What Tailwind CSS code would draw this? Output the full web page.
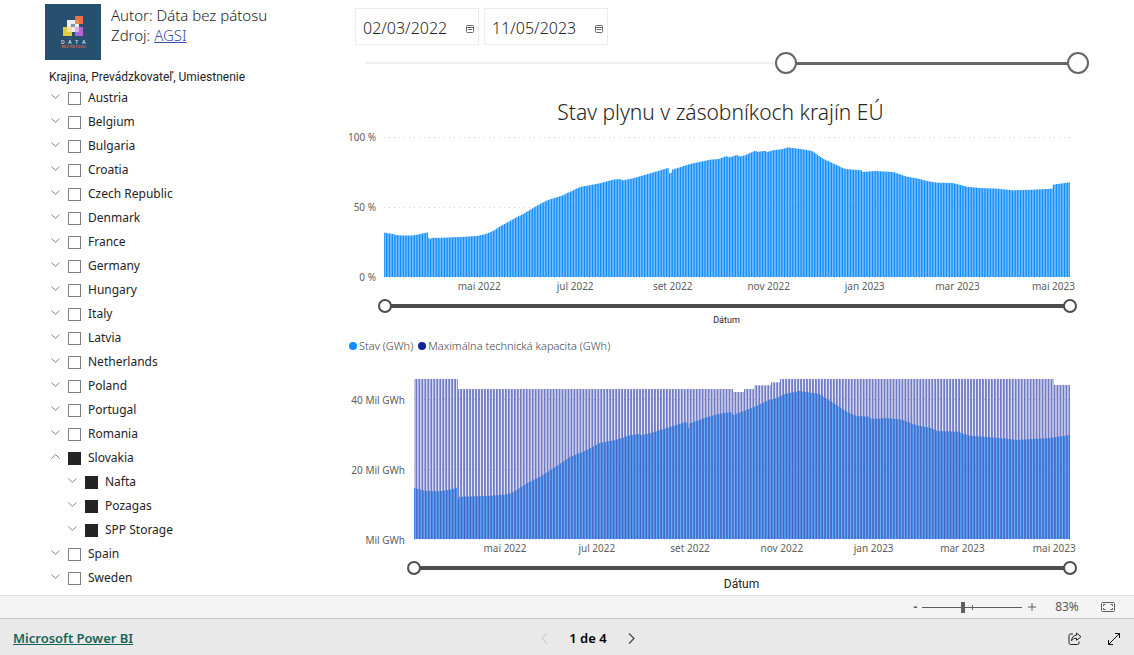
<!DOCTYPE html>
<html lang="sk">
<head>
<meta charset="utf-8">
<meta name="viewport" content="width=device-width, initial-scale=1">
<title>Stav plynu v zásobníkoch krajín EÚ</title>
<script src="https://cdn.jsdelivr.net/npm/@tailwindcss/browser@4"></script>
</head>
<body class="flex min-h-screen flex-col bg-white font-['Noto_Sans','Open_Sans',sans-serif] text-[#252423]">
<main class="flex flex-1">
  <aside class="w-[348px] shrink-0 pt-1 pl-[45px]">
    <header class="flex gap-[10px]">
      <svg class="size-14 shrink-0 bg-[#27506f]" viewBox="0 0 56 56" role="img" aria-label="Dáta bez pátosu">
        <rect x="22" y="16" width="12" height="12" fill="#eeeef2"/>
        <rect x="18" y="23" width="9" height="9" fill="#e3cb3a"/>
        <rect x="30" y="23" width="8" height="9" fill="#b565dc"/>
        <rect x="30" y="12" width="8" height="8" fill="#e8714a"/>
        <rect x="30" y="16" width="4" height="4" fill="#f08c4a"/>
        <rect x="22" y="23" width="5" height="5" fill="#eee0a0"/>
        <rect x="30" y="23" width="4" height="5" fill="#d9aeea"/>
        <rect x="26" y="20" width="4" height="3" fill="#7d93a8"/>
        <text y="40" font-size="5" font-family="Inter,sans-serif" font-weight="600" fill="#d5dde4"><tspan x="16">D</tspan><tspan x="23">Á</tspan><tspan x="30">T</tspan><tspan x="37">A</tspan></text>
        <text x="28.500" y="44" font-size="4" text-anchor="middle" font-family="Inter,sans-serif" font-weight="600" fill="#c8614c">BEZ PÁTOSU</text>
      </svg>
      <p class="pt-px text-[15px] leading-5 font-light">Autor: Dáta bez pátosu<br>Zdroj: <a href="#" class="text-[#3a4fa8] underline">AGSI</a></p>
    </header>
    <h2 class="mt-[9px] pl-1 font-[Roboto,sans-serif] text-[12px] leading-4">Krajina, Prevádzkovateľ, Umiestnenie</h2>
    <ul id="tree" class="pt-px pl-[5px] text-[12px] leading-6"></ul>
  </aside>

  <section class="min-w-0 flex-1 pt-2 pr-[45px]">
    <div class="flex gap-[5px] pl-[7px]" id="dates">
      <label class="flex h-[37px] w-[124px] items-center border border-[#ececec] pr-1 pl-[7px]">
        <input aria-label="Dátum od" value="02/03/2022" class="w-0 flex-1 pt-[2px] text-[16px] font-light outline-none">
        <svg class="mt-1 size-2" viewBox="0 0 8 8" fill="none" stroke="#66696c"><rect x=".5" y=".5" width="7" height="7" rx="1"/><path d="M.5 2.500h7M2 4.500h4"/></svg>
      </label>
      <label class="flex h-[37px] w-[124px] items-center border border-[#ececec] pr-1 pl-[7px]">
        <input aria-label="Dátum do" value="11/05/2023" class="w-0 flex-1 pt-[2px] text-[16px] font-light outline-none">
        <svg class="mt-1 size-2" viewBox="0 0 8 8" fill="none" stroke="#66696c"><rect x=".5" y=".5" width="7" height="7" rx="1"/><path d="M.5 2.500h7M2 4.500h4"/></svg>
      </label>
    </div>

    <div class="relative mt-[7px] ml-[17px] flex h-[22px] items-center">
      <div class="h-[2px] w-full bg-[#f0f0f0]"></div>
      <div class="absolute right-[11px] h-[3px] w-[40%] bg-[#666666]"></div>
      <input type="range" aria-label="Začiatok obdobia" min="0" max="1000" value="584" class="pointer-events-none absolute inset-0 w-full appearance-none bg-transparent [&::-webkit-slider-thumb]:pointer-events-auto [&::-webkit-slider-thumb]:size-[22px] [&::-webkit-slider-thumb]:appearance-none [&::-webkit-slider-thumb]:rounded-full [&::-webkit-slider-thumb]:border-2 [&::-webkit-slider-thumb]:border-[#666666] [&::-webkit-slider-thumb]:bg-white">
      <input type="range" aria-label="Koniec obdobia" min="0" max="1000" value="1000" class="pointer-events-none absolute inset-0 w-full appearance-none bg-transparent [&::-webkit-slider-thumb]:pointer-events-auto [&::-webkit-slider-thumb]:size-[22px] [&::-webkit-slider-thumb]:appearance-none [&::-webkit-slider-thumb]:rounded-full [&::-webkit-slider-thumb]:border-2 [&::-webkit-slider-thumb]:border-[#666666] [&::-webkit-slider-thumb]:bg-white">
    </div>

    <h1 class="mt-[22px] pl-1 text-center text-[21px] leading-8 font-[350]">Stav plynu v zásobníkoch krajín EÚ</h1>

    <div class="mt-[9px] flex pr-[19px]">
      <div class="flex h-[140px] w-9 shrink-0 flex-col justify-between pr-2 text-right text-[10px] leading-none whitespace-nowrap text-[#605e5c]">
        <span class="-mt-[5px]">100 %</span><span>50 %</span><span class="-mb-[5px]">0 %</span>
      </div>
      <svg id="percent" class="h-[154px] min-w-0 flex-1 overflow-visible"></svg>
    </div>
    <div class="relative mt-[8px] mr-3 ml-[30px] flex h-[14px] items-center">
      <div class="mx-[7px] h-1 flex-1 bg-[#4d4d4d]"></div>
      <input type="range" aria-label="Graf 1 od" value="0" class="pointer-events-none absolute inset-0 w-full appearance-none bg-transparent [&::-webkit-slider-thumb]:pointer-events-auto [&::-webkit-slider-thumb]:size-[14px] [&::-webkit-slider-thumb]:appearance-none [&::-webkit-slider-thumb]:rounded-full [&::-webkit-slider-thumb]:border-2 [&::-webkit-slider-thumb]:border-[#4d4d4d] [&::-webkit-slider-thumb]:bg-white">
      <input type="range" aria-label="Graf 1 do" value="100" class="pointer-events-none absolute inset-0 w-full appearance-none bg-transparent [&::-webkit-slider-thumb]:pointer-events-auto [&::-webkit-slider-thumb]:size-[14px] [&::-webkit-slider-thumb]:appearance-none [&::-webkit-slider-thumb]:rounded-full [&::-webkit-slider-thumb]:border-2 [&::-webkit-slider-thumb]:border-[#4d4d4d] [&::-webkit-slider-thumb]:bg-white">
    </div>
    <p class="pl-4 text-center font-[Roboto,sans-serif] text-[9px] leading-[14px]">Dátum</p>

    <div class="mt-[11px] flex items-center gap-[5px] pl-px text-[11px] leading-4 font-light whitespace-nowrap text-[#403e3c]">
      <span class="flex items-center gap-[2px]"><i class="size-2 rounded-full bg-[#118dff]"></i>Stav (GWh)</span>
      <span class="flex items-center gap-[2px]"><i class="size-2 rounded-full bg-[#12239e]"></i>Maximálna technická kapacita (GWh)</span>
    </div>

    <div class="mt-[25px] flex pr-[19px]">
      <div class="flex h-[160px] w-[66px] shrink-0 flex-col pt-[14px] pr-[9px] text-right text-[10px] whitespace-nowrap text-[#605e5c]">
        <span class="h-[70px] shrink-0 leading-[14px]">40 Mil GWh</span><span class="h-[70px] shrink-0 leading-[14px]">20 Mil GWh</span><span class="shrink-0 leading-[14px]">Mil GWh</span>
      </div>
      <svg id="energy" class="h-[174px] min-w-0 flex-1 overflow-visible"></svg>
    </div>
    <div class="relative mt-[8px] mr-3 ml-[59px] flex h-[14px] items-center">
      <div class="mx-[7px] h-1 flex-1 bg-[#4d4d4d]"></div>
      <input type="range" aria-label="Graf 2 od" value="0" class="pointer-events-none absolute inset-0 w-full appearance-none bg-transparent [&::-webkit-slider-thumb]:pointer-events-auto [&::-webkit-slider-thumb]:size-[14px] [&::-webkit-slider-thumb]:appearance-none [&::-webkit-slider-thumb]:rounded-full [&::-webkit-slider-thumb]:border-2 [&::-webkit-slider-thumb]:border-[#4d4d4d] [&::-webkit-slider-thumb]:bg-white">
      <input type="range" aria-label="Graf 2 do" value="100" class="pointer-events-none absolute inset-0 w-full appearance-none bg-transparent [&::-webkit-slider-thumb]:pointer-events-auto [&::-webkit-slider-thumb]:size-[14px] [&::-webkit-slider-thumb]:appearance-none [&::-webkit-slider-thumb]:rounded-full [&::-webkit-slider-thumb]:border-2 [&::-webkit-slider-thumb]:border-[#4d4d4d] [&::-webkit-slider-thumb]:bg-white">
    </div>
    <p class="pt-px pl-[46px] text-center font-[Roboto,sans-serif] text-[12px] leading-4">Dátum</p>
  </section>
</main>

<div class="flex h-[23px] items-center justify-end border-t border-[#dddddd] bg-[#f4f4f4] pr-[19px] text-[12px] text-[#605e5c]">
  <button class="w-[13px] text-center font-bold leading-none" aria-label="Oddialiť">-</button>
  <div class="relative flex h-3 w-[100px] items-center">
    <div class="h-px w-full bg-[#605e5c]"></div>
    <div class="absolute left-1/2 h-[5px] w-px bg-[#605e5c]"></div>
    <input type="range" aria-label="Priblíženie" value="41" class="absolute inset-0 w-full appearance-none bg-transparent [&::-webkit-slider-thumb]:h-[11px] [&::-webkit-slider-thumb]:w-1 [&::-webkit-slider-thumb]:appearance-none [&::-webkit-slider-thumb]:bg-[#605e5c]">
  </div>
  <button class="flex w-5 justify-center" aria-label="Priblížiť"><svg class="size-2" viewBox="0 0 8 8" stroke="#605e5c"><path d="M0 4h8M4 0v8"/></svg></button>
  <span class="w-[50px] text-center">83%</span>
  <button class="ml-[9px]" aria-label="Prispôsobiť strane"><svg class="h-[10px] w-[14px]" viewBox="0 0 14 10" fill="none" stroke="#605e5c"><rect x=".5" y=".5" width="13" height="9" rx="1"/><path d="M4.500 2.500h-2v1.500M2.500 6v1.500h2M9.500 2.500h2v1.500M11.500 6v1.500h-2"/></svg></button>
</div>
<footer class="grid h-[37px] grid-cols-[1fr_auto_1fr] items-center border-t border-[#c6c6c6] bg-[#e9e9e9] pt-[3px] pr-[14px] pl-[13px] text-[13px]">
  <a href="#" class="justify-self-start font-semibold text-[#17645a] underline">Microsoft Power BI</a>
  <nav class="flex items-center gap-[21px] pl-[43px] font-semibold text-black" aria-label="Strany">
    <button aria-label="Predchádzajúca" class="text-[#bdbdbd]"><svg class="h-[11px] w-[7px]" viewBox="0 0 7 11" fill="none" stroke="currentColor"><path d="M6 .5l-5 5 5 5"/></svg></button>
    <span>1 de 4</span>
    <button aria-label="Nasledujúca" class="text-[#444]"><svg class="h-[11px] w-[7px]" viewBox="0 0 7 11" fill="none" stroke="currentColor" stroke-width="1.200"><path d="M1 .5l5 5-5 5"/></svg></button>
  </nav>
  <div class="flex items-center gap-[26px] justify-self-end">
    <button aria-label="Zdieľať"><svg class="size-[14px]" viewBox="0 0 14 14" fill="none" stroke="#222" stroke-linejoin="round"><path d="M5 2H2.500Q1 2 1 3.500v7Q1 12.500 2.500 12.500h7Q11 12.500 11 11V9.500"/><path d="M8.500 1l4.500 3.700-4.500 3.600V6.300C6 6.200 4.700 7 3.500 8.800 3.700 5.500 5.500 3.400 8.500 3.200z"/></svg></button>
    <button aria-label="Celá obrazovka"><svg class="size-3" viewBox="0 0 12 12" fill="none" stroke="#111"><path d="M.5 11.500l11-11M7 .5h4.500V5M.5 7v4.500H5"/></svg></button>
  </div>
</footer>

<script>
const countries = ['Austria','Belgium','Bulgaria','Croatia','Czech Republic','Denmark','France','Germany','Hungary','Italy','Latvia','Netherlands','Poland','Portugal','Romania','Slovakia',['Nafta'],['Pozagas'],['SPP Storage'],'Spain','Sweden'];
document.getElementById('tree').innerHTML = countries.map(c => {
  const child = Array.isArray(c), name = child ? c[0] : c, open = name === 'Slovakia', on = child || open;
  return `<li class="flex h-6 items-center ${child ? 'pl-[17px]' : ''}">
    <button class="flex w-[10px] justify-center pb-1" aria-label="${open ? 'Zbaliť' : 'Rozbaliť'} ${name}"><svg class="h-[5px] w-[9px]" viewBox="0 0 9 5" fill="none" stroke="${child ? '#a08585' : '#808080'}"><path d="${open ? 'M.5 4.500l4-4 4 4' : 'M.5 .5l4 4 4-4'}"/></svg></button>
    <label class="flex items-center"><input type="checkbox" ${on ? 'checked' : ''} class="mr-[7px] ml-2 size-[13px] appearance-none border border-[#808080] bg-white checked:border-[#252423] checked:bg-[#252423]">${name}</label></li>`;
}).join('');

const DAYS = 436;
const months = [[60,'mai 2022'],[121,'jul 2022'],[183,'set 2022'],[244,'nov 2022'],[305,'jan 2023'],[364,'mar 2023'],[425,'mai 2023']];

// Linear interpolation between [position, value] pairs.
function at(points, x) {
  let i = 1;
  while (i < points.length - 1 && points[i][0] < x) i++;
  const [x0, y0] = points[i - 1], [x1, y1] = points[i];
  return y0 + (y1 - y0) * Math.min(1, Math.max(0, (x - x0) / (x1 - x0)));
}
// Each series places its bar inside the day's slot: from and size are shares of the slot.
function draw(id, base, grid, series, span) {
  let s = '';
  for (const y of grid) s += `<line x1="0" x2="100%" y1="${y}" y2="${y}" stroke="#d4d4d4" stroke-dasharray="1 4"/>`;
  const slot = 100 / DAYS;
  for (let d = 0; d < DAYS; d++) for (const sr of series) {
    const h = at(sr.points, (d + 0.5) / DAYS * span);
    s += `<rect x="${((d + sr.from) * slot).toFixed(4)}%" y="${(base - h).toFixed(1)}" width="${(sr.size * slot).toFixed(4)}%" height="${h.toFixed(1)}" fill="${sr.color}"/>`;
  }
  for (const [d, t] of months) s += `<text x="${(d + 0.5) * slot}%" y="${base + 13}" text-anchor="middle" font-size="10" fill="#605e5c">${t}</text>`;
  document.getElementById(id).innerHTML = s;
}
const fill = [[0,44.5],[3,44],[9,43],[12,42],[20,41.5],[28,41.5],[34,42.5],[38,43.5],[44.5,44.7],[45,37],[46,37],[47,39.200],[56,39.200],[76,40],[93,41],[102,43],[109,46],[116,50.500],[129,57.700],[139,63],[156,73],[164,77],[178,81.300],[196,90],[216,93.700],[229,97.300],[236.500,98],[238,96.500],[249,98.700],[263,102.700],[285,109.300],[285.500,103.700],[287,103.700],[287.600,107],[306,113],[326,117.300],[334.500,118],[343.500,121.300],[344,119.300],[354.300,122.300],[355,120.300],[361,121.700],[371.500,126.500],[373,125],[381.300,126.300],[382.500,124.700],[389,126.700],[399,128],[404,129.700],[408,129],[419,127.700],[428,126],[439,118.300],[449,113.700],[461,108],[477.500,106.700],[478,105],[491,106],[509,105],[523,100.300],[536,98],[543,96],[553,94.300],[569,94],[583,90.300],[596,89],[614,88.300],[623,87.300],[629,86.700],[649,87.300],[668,88.300],[668.500,92.300],[679,93.700],[686,94.700]];
const stored = [[0,51],[13,48],[26,47.700],[36,49.300],[43,51.300],[43.500,40],[44.500,40],[45,42.300],[73,43],[91,44.300],[98,46],[111,54.300],[128,63.300],[143,73],[156,82],[171,88],[186,96],[203,99.300],[216,103.700],[225,105],[227,103.700],[236,105.700],[246,108.700],[273,117.300],[273.500,111.300],[275,111.300],[275.500,115.300],[293,121.700],[306,125.300],[318,127],[318.600,123.700],[329,127.700],[343,133],[353,138],[363,141],[371,145],[386,148],[406,145],[416,138.300],[434,126.700],[443,123],[456,122.300],[457,120],[473,121],[488,119.300],[503,113.700],[516,111.300],[524,108],[544,107.300],[556,103.300],[586,101],[603,99],[636,101],[656,104]];
const capacity = [[0,160],[43,160],[43.100,150],[319,150],[319.100,147],[329.500,147],[329.600,150],[340,150],[340.100,153.700],[356,153.700],[356.100,156.700],[366,156.700],[366.100,160],[639,160],[639.100,154],[656,154]];
draw('percent', 140, [0.5, 70.5, 140.5], [{points: fill, color: '#118dff', from: 0.1, size: 0.8}], 686);
draw('energy', 160, [20.5, 90.5, 160.5], [{points: stored, color: '#118dff', from: 0.07, size: 0.5}, {points: capacity, color: '#12239e', from: 0.5, size: 0.4}], 656);
</script>
</body>
</html>
